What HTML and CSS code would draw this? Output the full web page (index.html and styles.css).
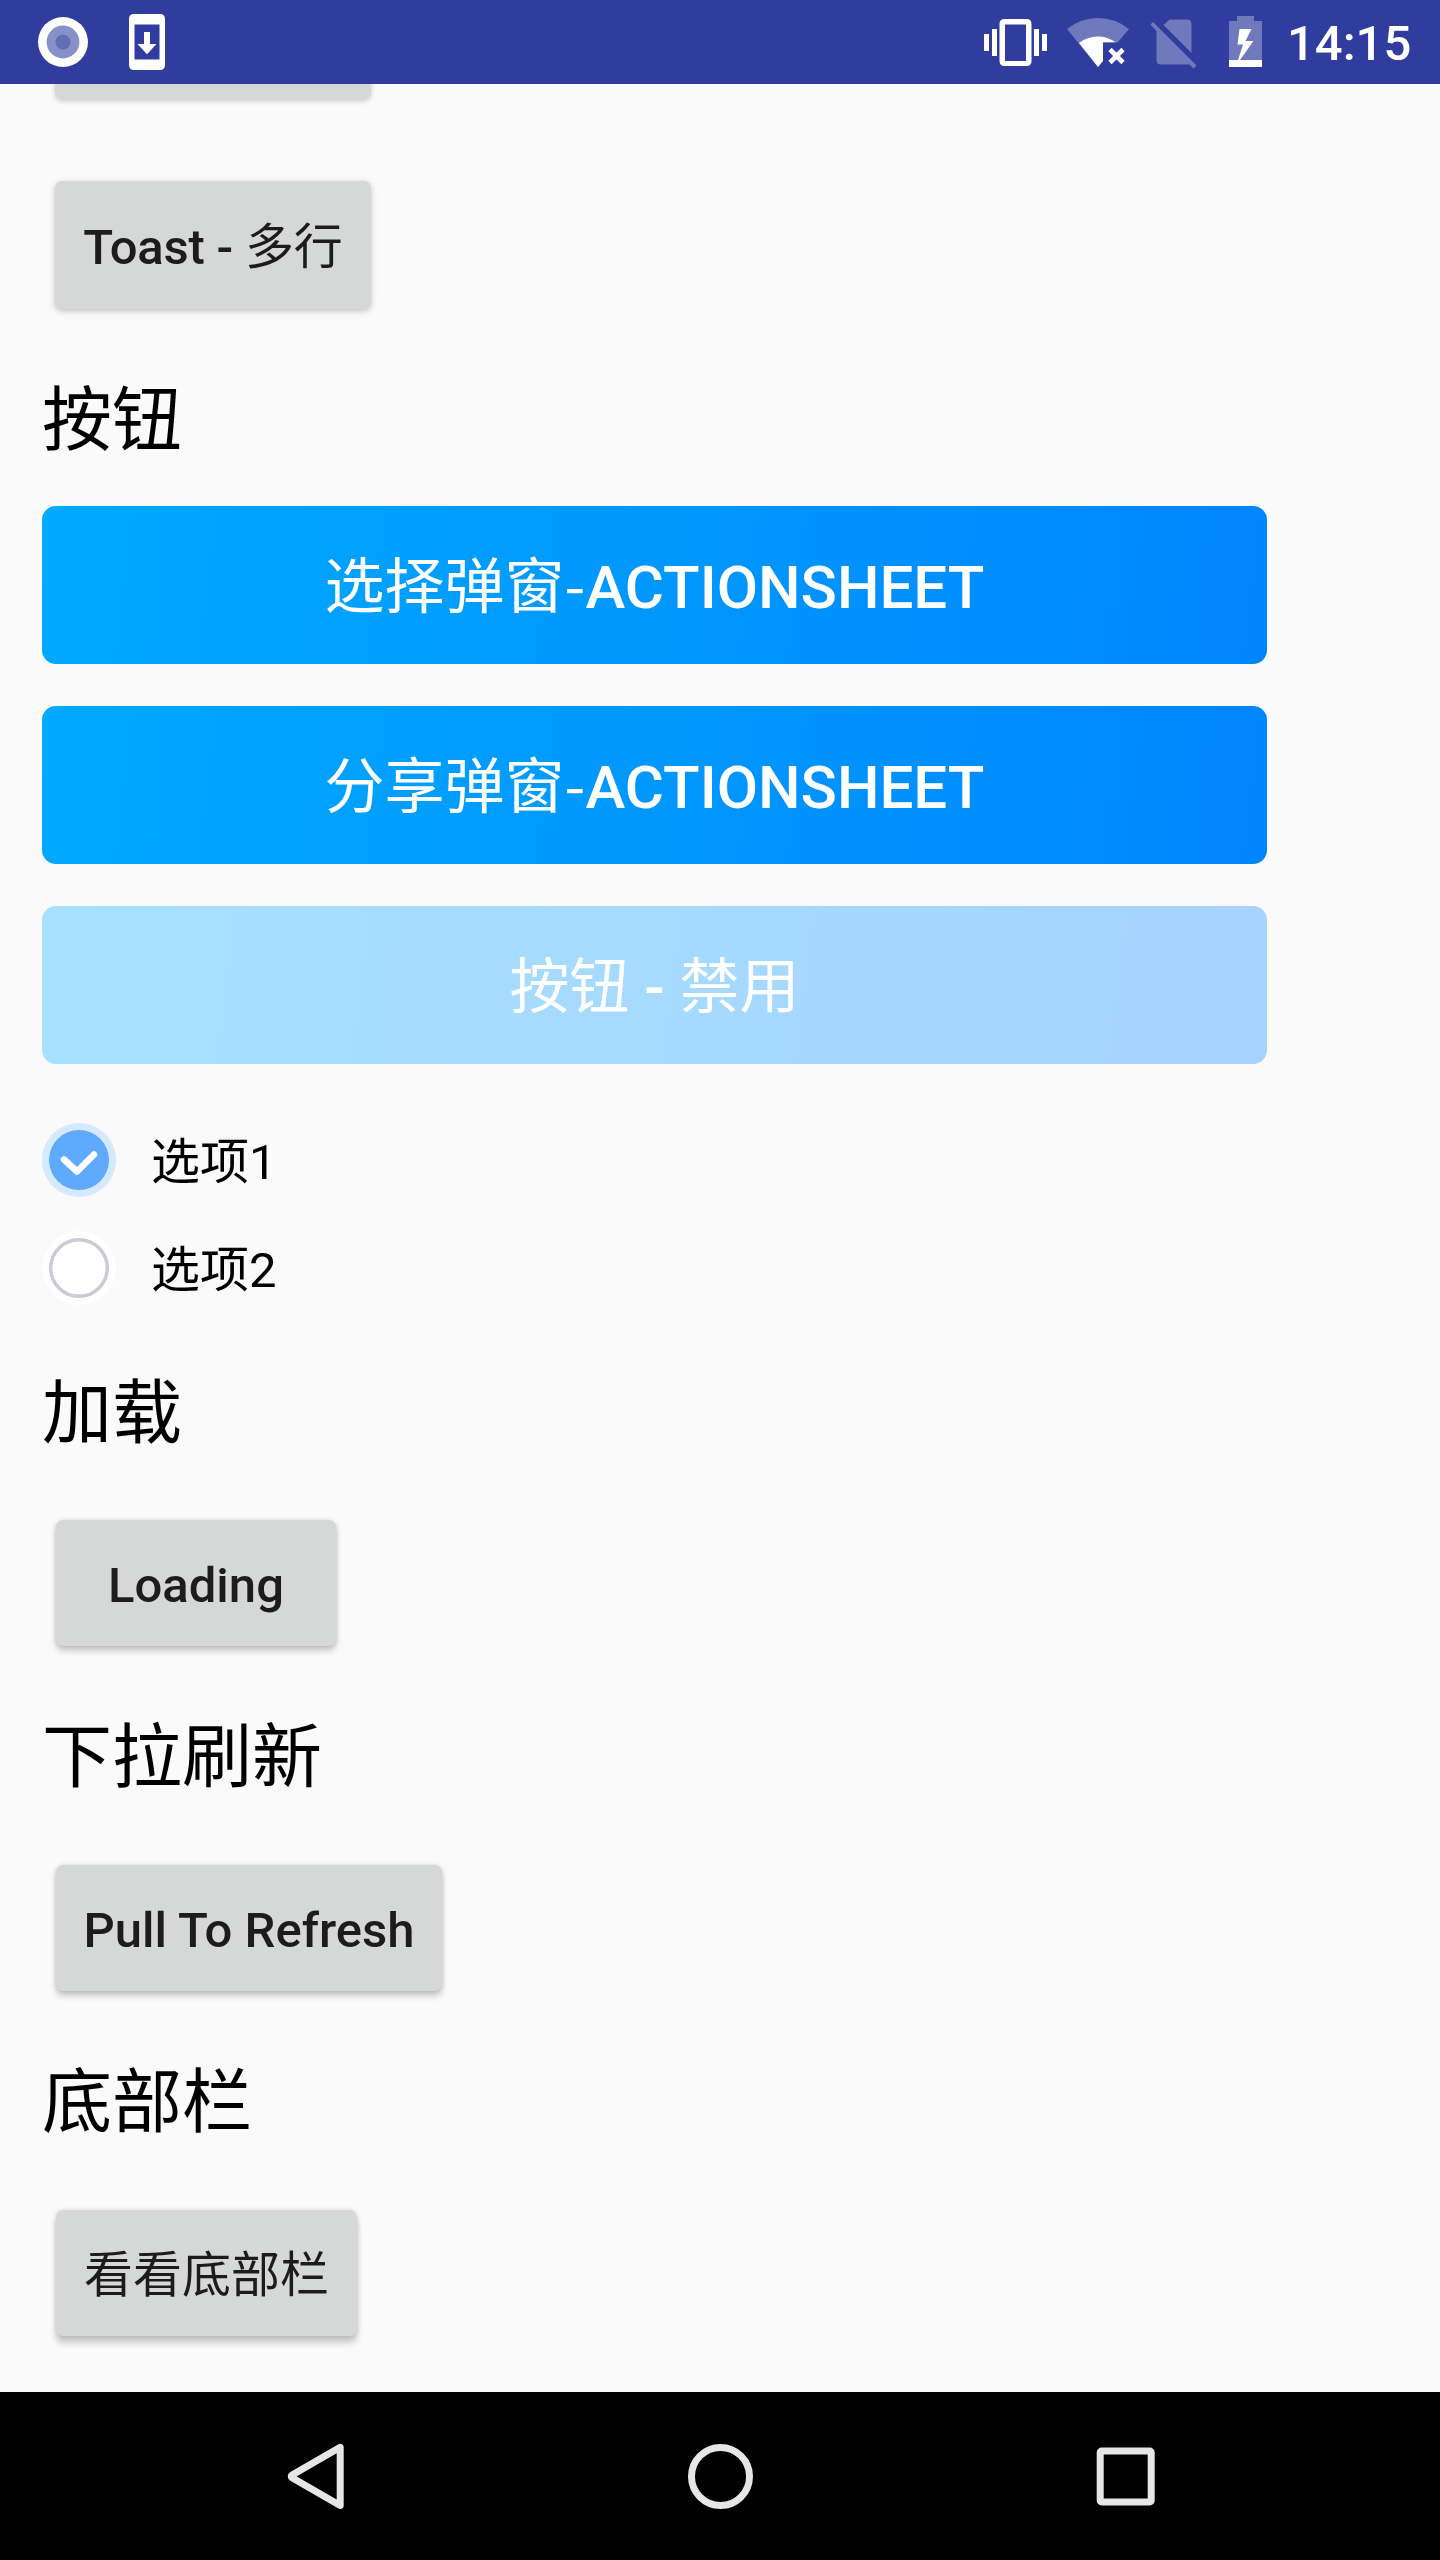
FILE: index.html
```html
<!DOCTYPE html>
<html lang="zh-CN">
<head>
<meta charset="utf-8">
<title>组件示例</title>
<link rel="stylesheet" href="styles.css">
</head>
<body>
<div class="screen">
  <header class="status">
    <svg class="icon" width="180" height="84" viewBox="0 0 180 84">
      <circle cx="63" cy="42" r="25" fill="#fff"/>
      <circle cx="63" cy="42" r="16.4" fill="#8790c9"/>
      <circle cx="63" cy="42" r="7.6" fill="#636eb7"/>
      <path fill="#fff" fill-rule="evenodd" d="M134 14h26q5 0 5 5v46q0 5-5 5h-26q-5 0-5-5V19q0-5 5-5zM134.500 24.500v35h25v-35zM144 32h6v12h6.500L147 54.300 137.500 44h6.500z"/>
    </svg>
    <div class="tray">
      <svg class="icon" width="307" height="84" viewBox="980 0 307 84">
        <path fill="#fff" d="M984 34h5v17h-5zM992 29h5v27h-5zM1034 29h5v27h-5zM1042 34h5v17h-5z"/>
        <path fill="#fff" fill-rule="evenodd" d="M1004.500 19h22q5 0 5 5v37q0 5-5 5h-22q-5 0-5-5V24q0-5 5-5zM1005 24.500v36.500h21V24.500z"/>
        <path fill="#7079bc" d="M1067 29Q1081 18 1098 18T1129 29L1117.500 42.500H1103V61L1098 67z"/>
        <path fill="#fff" d="M1079 43Q1087 36.500 1098 36.500 1107.500 36.500 1115.500 42.300H1103V61L1098 67z"/>
        <path stroke="#fff" stroke-width="4.600" d="M1110 49.500l13 13M1123 49.500l-13 13"/>
        <path fill="#7079bc" d="M1163.500 25l6-5.500h17q5 0 5 5V53zM1150.500 24.500L1153 22l43.500 43.500-3 3-4-4H1161q-4.500 0-4.500-4.500V31z"/>
        <path fill="#7079bc" d="M1229 21h8v-5h17v5h8v39h-33z"/>
        <path fill="#fff" d="M1229 60h9l5-15.500h-5.500L1239.500 29h12l-6 12h8L1240 60h22v7h-33z"/>
      </svg>
      <span class="clock">14:15</span>
    </div>
  </header>

  <main class="content">
    <div class="btn btn-cut"></div>
    <div class="btn btn-toast">Toast - <span class="cjk">多行</span></div>

    <h2 class="title title-buttons">按钮</h2>
    <div class="blue"><span class="cjk">选择弹窗-</span>ACTIONSHEET</div>
    <div class="blue"><span class="cjk">分享弹窗-</span>ACTIONSHEET</div>
    <div class="blue blue-disabled"><span class="cjk">按钮</span> - <span class="cjk">禁用</span></div>

    <div class="options">
      <label class="option">
        <svg width="74" height="74" viewBox="0 0 74 74">
          <circle cx="37" cy="37" r="37" fill="#d6eaff"/>
          <circle cx="37" cy="37" r="30" fill="#5daaff"/>
          <path d="M22 36.500L35 48.500 52 31.500" fill="none" stroke="#fff" stroke-width="6.500" stroke-linecap="round" stroke-linejoin="round"/>
        </svg>
        <span class="option-text">选项1</span>
      </label>
      <label class="option">
        <svg width="74" height="74" viewBox="0 0 74 74">
          <circle cx="37" cy="37" r="37" fill="#fff"/>
          <circle cx="37" cy="37" r="28.300" fill="#fff" stroke="#c9ccd7" stroke-width="3.500"/>
        </svg>
        <span class="option-text">选项2</span>
      </label>
    </div>

    <h2 class="title title-loading">加载</h2>
    <div class="btn btn-loading">Loading</div>
    <h2 class="title">下拉刷新</h2>
    <div class="btn btn-refresh">Pull To Refresh</div>
    <h2 class="title">底部栏</h2>
    <div class="btn btn-bottom"><span class="cjk">看看底部栏</span></div>
  </main>

  <nav class="nav">
    <svg width="70" height="70" viewBox="0 0 70 70">
      <path d="M60.200 6.300V64.500L12.500 37q-2.500-1.600 0-3.200z" fill="none" stroke="#e6e6e6" stroke-width="7" stroke-linejoin="round"/>
    </svg>
    <svg width="70" height="70" viewBox="0 0 70 70">
      <circle cx="35.500" cy="35.400" r="29" fill="none" stroke="#e6e6e6" stroke-width="7"/>
    </svg>
    <svg width="70" height="70" viewBox="0 0 70 70">
      <rect x="10.200" y="10" width="51" height="51" rx="1.500" fill="none" stroke="#e6e6e6" stroke-width="7"/>
    </svg>
  </nav>
</div>
</body>
</html>
```
FILE: styles.css
```css
* { box-sizing: border-box; }

body {
  margin: 0;
  font-family: Roboto, "Noto Sans CJK SC", sans-serif;
  background: #fafafa;
}

.screen {
  display: flex;
  flex-direction: column;
  width: 1440px;
  height: 2560px;
  overflow: hidden;
}

.status {
  flex: none;
  display: flex;
  justify-content: space-between;
  height: 84px;
  background: #303d9f;
  color: #fff;
}

.icon { display: block; }

.tray {
  display: flex;
  width: 460px;
}

.clock {
  font-size: 49px;
  font-weight: 500;
  line-height: 88px;
}

.content {
  flex: 1;
  display: flex;
  flex-direction: column;
  align-items: flex-start;
  padding-left: 42px;
  overflow: hidden;
}

.btn {
  flex: none;
  height: 126px;
  margin-left: 14px;
  border-radius: 7px;
  background: #d6d8d7;
  box-shadow: 0 5px 6px rgba(0, 0, 0, .2), 0 0 5px rgba(0, 0, 0, .12);
  color: #1c1c1c;
  font-size: 49px;
  font-weight: 500;
  line-height: 131px;
  text-align: center;
  white-space: pre;
}

.cjk {
  font-family: "Noto Sans CJK SC", sans-serif;
  font-weight: 400;
  line-height: 0;
}

.btn-cut {
  width: 316px;
  height: 35px;
  margin-top: -20px;
  margin-left: 13px;
  box-shadow: 0 2px 5px rgba(0, 0, 0, .2);
}

.btn-toast {
  width: 316px;
  height: 128px;
  margin-top: 82px;
  margin-left: 13px;
  box-shadow: 0 2px 6px rgba(0, 0, 0, .24);
  letter-spacing: -.2px;
  line-height: 133px;
}

.btn-loading { width: 280px; }
.btn-refresh { width: 386px; }

.btn-bottom {
  width: 301px;
  box-shadow: 0 7px 6px rgba(0, 0, 0, .2), 0 0 5px rgba(0, 0, 0, .12);
}

.title {
  flex: none;
  height: 100px;
  margin: 62px 0 57px;
  color: #000;
  font-size: 70px;
  font-weight: 400;
  line-height: 100px;
}

.title-buttons { margin: 62px 0 35px; }
.title-loading { margin: 59px 0 56px; }

.blue {
  flex: none;
  width: 1225px;
  height: 158px;
  margin-bottom: 42px;
  border-radius: 14px;
  background: linear-gradient(97.4deg, #00aaff, #0085ff);
  color: #fff;
  font-size: 60px;
  font-weight: 500;
  line-height: 163px;
  text-align: center;
  white-space: pre;
}

.blue-disabled {
  margin-bottom: 59px;
  background: linear-gradient(97.4deg, #a6e1ff, #a6d3ff);
}

.options {
  display: flex;
  flex-direction: column;
  gap: 34px;
}

.option {
  display: flex;
  align-items: center;
  gap: 35px;
  height: 74px;
  color: #000;
  font-size: 49px;
  line-height: 74px;
}

.option-text { padding-top: 5px; }

.nav {
  flex: none;
  display: flex;
  justify-content: space-between;
  align-items: center;
  height: 168px;
  padding: 0 280px;
  background: #000;
}
```
